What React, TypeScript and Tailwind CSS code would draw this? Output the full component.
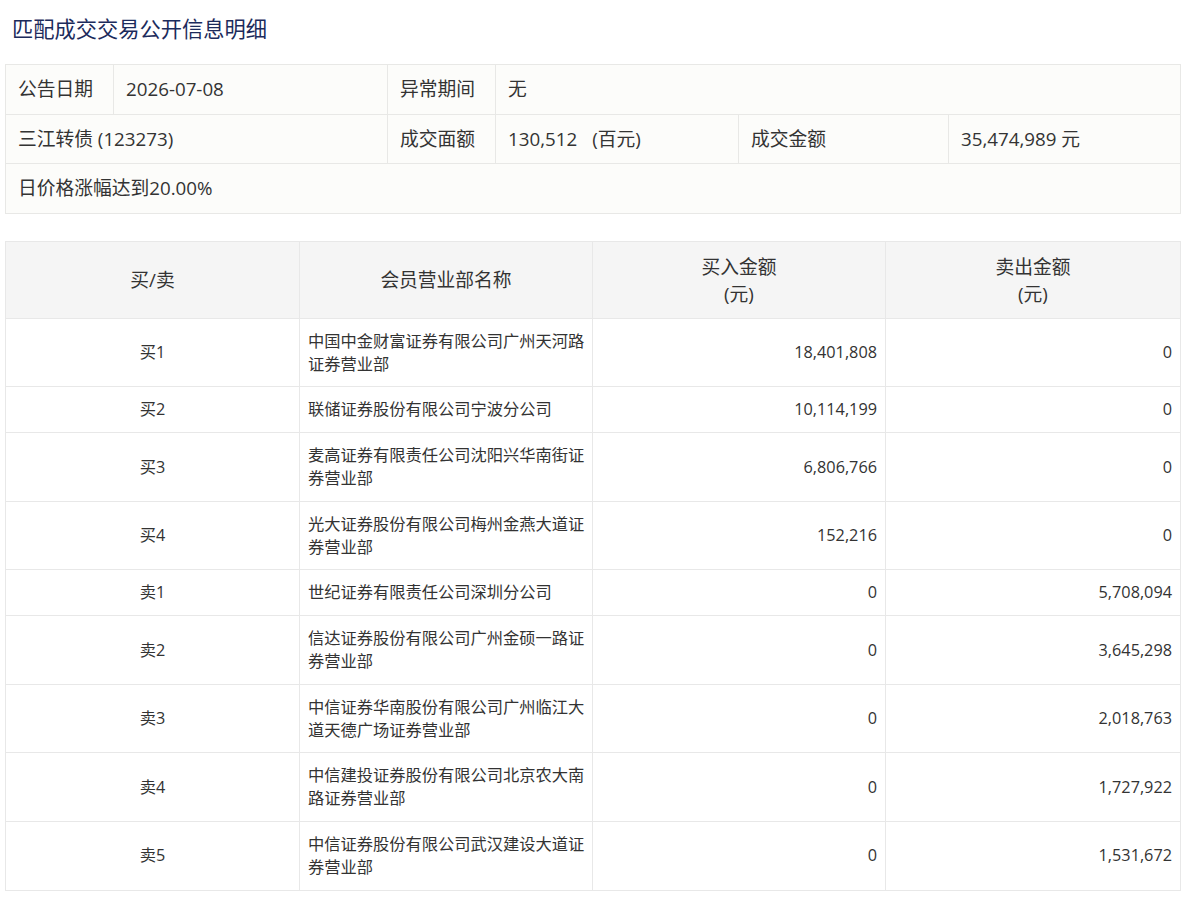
import React from "react";

const FONT = '"Open Sans", "Noto Sans CJK SC", sans-serif';

type Row = { side: string; name: string[]; buy: string; sell: string };

const rows: Row[] = [
  { side: "买1", name: ["中国中金财富证券有限公司广州天河路", "证券营业部"], buy: "18,401,808", sell: "0" },
  { side: "买2", name: ["联储证券股份有限公司宁波分公司"], buy: "10,114,199", sell: "0" },
  { side: "买3", name: ["麦高证券有限责任公司沈阳兴华南街证", "券营业部"], buy: "6,806,766", sell: "0" },
  { side: "买4", name: ["光大证券股份有限公司梅州金燕大道证", "券营业部"], buy: "152,216", sell: "0" },
  { side: "卖1", name: ["世纪证券有限责任公司深圳分公司"], buy: "0", sell: "5,708,094" },
  { side: "卖2", name: ["信达证券股份有限公司广州金硕一路证", "券营业部"], buy: "0", sell: "3,645,298" },
  { side: "卖3", name: ["中信证券华南股份有限公司广州临江大", "道天德广场证券营业部"], buy: "0", sell: "2,018,763" },
  { side: "卖4", name: ["中信建投证券股份有限公司北京农大南", "路证券营业部"], buy: "0", sell: "1,727,922" },
  { side: "卖5", name: ["中信证券股份有限公司武汉建设大道证", "券营业部"], buy: "0", sell: "1,531,672" },
];

export default function App() {
  const infoCell =
    "border border-[#e8e8e6] px-[12px] py-[11px] leading-[26.6px] text-left align-middle whitespace-nowrap";
  const th =
    "border border-[#e8e8e8] py-[11px] px-2 leading-[27px] font-normal text-center align-middle";
  const td = "border border-[#e8e8e8] py-[11px] px-2 leading-[22.8px] align-middle";
  return (
    <div className="min-h-screen bg-white text-[#333]" style={{ fontFamily: FONT }}>
      <div className="pl-[12px] pt-[14px] pb-[20px] text-[21.25px] leading-[30px] text-[#1c2b5c]">
        匹配成交交易公开信息明细
      </div>

      <div className="pl-[5px]">
        <table className="w-[1175px] table-fixed border-collapse bg-[#fcfcfa] text-[18.75px]">
          <colgroup>
            <col className="w-[108px]" />
            <col className="w-[274px]" />
            <col className="w-[108px]" />
            <col className="w-[243px]" />
            <col className="w-[210px]" />
            <col className="w-[232px]" />
          </colgroup>
          <tbody>
            <tr>
              <td className={infoCell}>公告日期</td>
              <td className={infoCell}>2026-07-08</td>
              <td className={infoCell}>异常期间</td>
              <td className={infoCell} colSpan={3}>
                无
              </td>
            </tr>
            <tr>
              <td className={infoCell} colSpan={2}>
                三江转债 (123273)
              </td>
              <td className={infoCell}>成交面额</td>
              <td className={infoCell}>
                130,512<span className="ml-[15px]">(百元)</span>
              </td>
              <td className={infoCell}>成交金额</td>
              <td className={infoCell}>35,474,989 元</td>
            </tr>
            <tr>
              <td className={infoCell} colSpan={6}>
                日价格涨幅达到20.00%
              </td>
            </tr>
          </tbody>
        </table>

        <table className="mt-[27px] w-[1175px] table-fixed border-collapse text-[16.25px]">
          <colgroup>
            <col className="w-[294px]" />
            <col className="w-[293px]" />
            <col className="w-[293px]" />
            <col className="w-[295px]" />
          </colgroup>
          <thead>
            <tr className="bg-[#f5f5f5] text-[18.75px]">
              <th className={th}>买/卖</th>
              <th className={th}>会员营业部名称</th>
              <th className={th}>
                买入金额
                <br />
                (元)
              </th>
              <th className={th}>
                卖出金额
                <br />
                (元)
              </th>
            </tr>
          </thead>
          <tbody>
            {rows.map((r) => (
              <tr key={r.side} className="bg-white">
                <td className={`${td} text-center`}>{r.side}</td>
                <td className={`${td} text-left`}>
                  {r.name.map((l, i) => (
                    <div key={i} className="whitespace-nowrap">
                      {l}
                    </div>
                  ))}
                </td>
                <td className={`${td} text-right`}>{r.buy}</td>
                <td className={`${td} text-right`}>{r.sell}</td>
              </tr>
            ))}
          </tbody>
        </table>
      </div>
    </div>
  );
}
